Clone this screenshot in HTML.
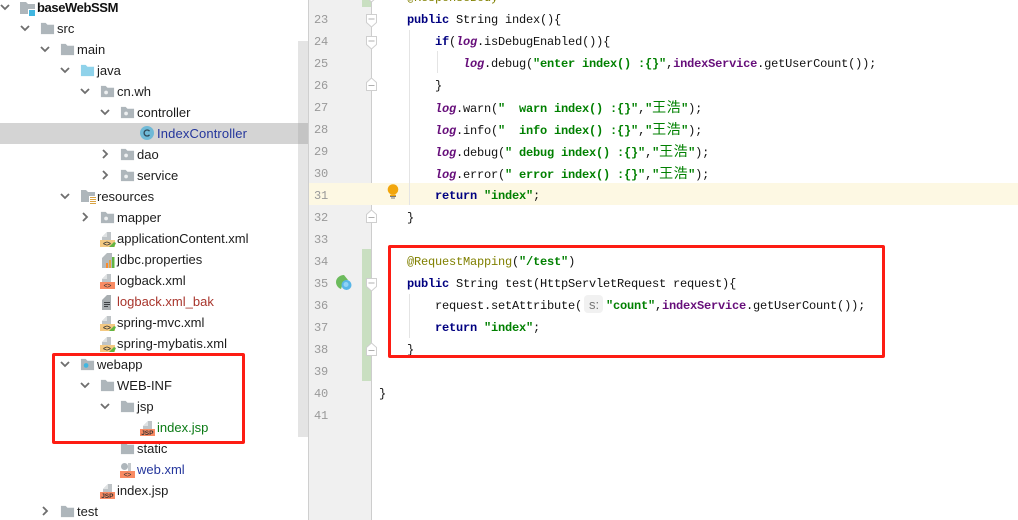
<!DOCTYPE html>
<html>
<head>
<meta charset="utf-8">
<style>
html,body{margin:0;padding:0;background:#fff;}
#r{position:relative;width:1018px;height:520px;overflow:hidden;background:#fff;}
#r div,#r svg,#r span.a{position:absolute;}
.t{font:13px/21px "Liberation Sans","DejaVu Sans",sans-serif;color:#1c1c1c;white-space:nowrap;height:21px;}
.c{font:12px/22px "Liberation Mono",monospace;letter-spacing:-.2px;color:#111;white-space:pre;height:22px;}
.n{font:12px/22px "Liberation Mono",monospace;letter-spacing:-.2px;color:#999;left:314px;white-space:pre;height:22px;}
.k{color:#000080;font-weight:bold}
.s{color:#008000;font-weight:bold}
.f{color:#660e7a;font-weight:bold}
.l{color:#660e7a;font-weight:bold;font-style:italic}
.o{color:#808000}
.z{font:14px "Liberation Sans","Noto Sans CJK SC",sans-serif;letter-spacing:.5px;color:#008000;}
.box{border:3px solid #fd1c13;border-radius:2px;box-sizing:border-box;}
</style>
</head>
<body>
<div id="r">
<svg width="0" height="0" style="left:0;top:0">
<defs>
<symbol id="folder" viewBox="0 0 16 16"><path d="M1 2h5l2 2h7v10H1z" fill="#aeb6bb"/></symbol>
<symbol id="java" viewBox="0 0 16 16"><path d="M1 2h5l2 2h7v10H1z" fill="#8fd2ea"/></symbol>
<symbol id="pkg" viewBox="0 0 16 16"><path d="M1 2h5l2 2h7v10H1z" fill="#aeb6bb"/><circle cx="6.500" cy="9" r="2" fill="#eef0f1"/></symbol>
<symbol id="web" viewBox="0 0 16 16"><path d="M1 2h5l2 2h7v10H1z" fill="#aeb6bb"/><circle cx="6.500" cy="9" r="2.500" fill="#40b6e0"/></symbol>
<symbol id="root" viewBox="0 0 16 16"><path d="M0 1h6l2 2h7v10H0z" fill="#aeb6bb"/><rect x="8" y="8" width="7" height="8" fill="#fff"/><rect x="9" y="9" width="6" height="6" fill="#40b6e0"/></symbol>
<symbol id="res" viewBox="0 0 16 16"><path d="M1 1h5l2 2h7v10H1z" fill="#aeb6bb"/><rect x="9" y="7" width="7" height="9" fill="#fff"/><path d="M10 8.500h6M10 10.500h6M10 12.500h6M10 14.500h6" stroke="#d9a343" stroke-width="1"/></symbol>
<symbol id="xmls" viewBox="0 0 16 16"><path d="M2 6l5-5h4v8H2z" fill="#bfc4c7"/><path d="M2 6l5-5v5z" fill="#dfe2e3"/><rect x="0" y="9" width="15" height="7" fill="#f4c982"/><text x="3" y="15" font-family="Liberation Mono,monospace" font-size="7" font-weight="bold" letter-spacing="-.5" fill="#333">&lt;&gt;</text><path d="M9 16l5-5 2 1-2 4z" fill="#62b543"/></symbol>
<symbol id="xmlo" viewBox="0 0 16 16"><path d="M2 6l5-5h4v8H2z" fill="#bfc4c7"/><path d="M2 6l5-5v5z" fill="#dfe2e3"/><rect x="0" y="9" width="15" height="7" fill="#f98b63"/><text x="3.500" y="15" font-family="Liberation Mono,monospace" font-size="7" letter-spacing="-.5" fill="#333">&lt;&gt;</text></symbol>
<symbol id="webx" viewBox="0 0 16 16"><circle cx="4.500" cy="4.500" r="3.500" fill="#aeb6bb"/><path d="M8 1h3v8H8z" fill="#c4c9cc"/><rect x="0" y="9" width="15" height="7" fill="#f98b63"/><text x="3.500" y="15" font-family="Liberation Mono,monospace" font-size="7" letter-spacing="-.5" fill="#333">&lt;&gt;</text></symbol>
<symbol id="prop" viewBox="0 0 16 16"><path d="M2 6l5-5h5v15H2z" fill="#b4babd"/><rect x="6" y="11" width="2" height="5" fill="#f98b2e"/><rect x="9" y="8" width="2" height="8" fill="#e8a33d"/><rect x="12" y="5" width="2.500" height="11" fill="#62b543"/></symbol>
<symbol id="txt" viewBox="0 0 16 16"><path d="M2 6l5-5h4v15H2z" fill="#a8aeb1"/><path d="M4 8.500h6M4 10.500h6M4 12.500h4" stroke="#3c4043" stroke-width="1"/></symbol>
<symbol id="jsp" viewBox="0 0 16 16"><path d="M3 6l5-5h4v8H3z" fill="#bfc4c7"/><path d="M3 6l5-5v5z" fill="#dfe2e3"/><rect x="0" y="9" width="15" height="7" fill="#f98b63"/><text x="1.200" y="15" font-family="Liberation Sans,sans-serif" font-size="6.500" font-weight="bold" fill="#333">JSP</text></symbol>
<symbol id="dn" viewBox="0 0 10 10"><path d="M1 3l4 4 4-4" fill="none" stroke="#6e6e6e" stroke-width="1.800"/></symbol>
<symbol id="rt" viewBox="0 0 10 10"><path d="M3 1l4 4-4 4" fill="none" stroke="#6e6e6e" stroke-width="1.800"/></symbol>
<symbol id="fo" viewBox="0 0 12 14"><path d="M.5.500h10v8l-5 4.500-5-4.500z" fill="#fff" stroke="#cfcfcf"/><path d="M2.500 5h6" stroke="#b0b0b0"/></symbol>
<symbol id="fc" viewBox="0 0 12 14"><path d="M.5 13.500h10v-8l-5-4.500-5 4.500z" fill="#fff" stroke="#cfcfcf"/><path d="M2.500 8.500h6" stroke="#b0b0b0"/></symbol>
</defs>
</svg>

<!-- project tree -->
<div style="left:0;top:123px;width:308px;height:21px;background:#d4d4d4"></div>
<div style="left:298px;top:41px;width:10px;height:396px;background:#e4e4e4"></div>
<div style="left:298px;top:123px;width:10px;height:21px;background:#c4c4c4"></div>
<div style="left:308px;top:0;width:1px;height:520px;background:#cfcfcf"></div>

<svg style="left:0;top:2px" width="10" height="10"><use href="#dn"/></svg>
<svg style="left:20px;top:1px" width="16" height="16"><use href="#root"/></svg>
<div class="t" style="left:37px;top:-3px;font-weight:bold;color:#111;letter-spacing:-.4px">baseWebSSM</div>

<svg style="left:20px;top:23px" width="10" height="10"><use href="#dn"/></svg>
<svg style="left:40px;top:21px" width="15" height="15"><use href="#folder"/></svg>
<div class="t" style="left:57px;top:18px">src</div>

<svg style="left:40px;top:44px" width="10" height="10"><use href="#dn"/></svg>
<svg style="left:60px;top:42px" width="15" height="15"><use href="#folder"/></svg>
<div class="t" style="left:77px;top:39px">main</div>

<svg style="left:60px;top:65px" width="10" height="10"><use href="#dn"/></svg>
<svg style="left:80px;top:63px" width="15" height="15"><use href="#java"/></svg>
<div class="t" style="left:97px;top:60px">java</div>

<svg style="left:80px;top:86px" width="10" height="10"><use href="#dn"/></svg>
<svg style="left:100px;top:84px" width="15" height="15"><use href="#pkg"/></svg>
<div class="t" style="left:117px;top:81px">cn.wh</div>

<svg style="left:100px;top:107px" width="10" height="10"><use href="#dn"/></svg>
<svg style="left:120px;top:105px" width="15" height="15"><use href="#pkg"/></svg>
<div class="t" style="left:137px;top:102px">controller</div>

<svg style="left:140px;top:126px" width="14" height="14"><circle cx="7" cy="7" r="7" fill="#6fb9d6"/><path d="M9.500 5.200A3 3 0 1 0 9.500 8.800" fill="none" stroke="#2f4858" stroke-width="1.300"/></svg>
<div class="t" style="left:157px;top:123px;color:#24369c;letter-spacing:.13px">IndexController</div>

<svg style="left:100px;top:149px" width="10" height="10"><use href="#rt"/></svg>
<svg style="left:120px;top:147px" width="15" height="15"><use href="#pkg"/></svg>
<div class="t" style="left:137px;top:144px">dao</div>

<svg style="left:100px;top:170px" width="10" height="10"><use href="#rt"/></svg>
<svg style="left:120px;top:168px" width="15" height="15"><use href="#pkg"/></svg>
<div class="t" style="left:137px;top:165px">service</div>

<svg style="left:60px;top:191px" width="10" height="10"><use href="#dn"/></svg>
<svg style="left:80px;top:189px" width="16" height="16"><use href="#res"/></svg>
<div class="t" style="left:97px;top:186px">resources</div>

<svg style="left:80px;top:212px" width="10" height="10"><use href="#rt"/></svg>
<svg style="left:100px;top:210px" width="15" height="15"><use href="#pkg"/></svg>
<div class="t" style="left:117px;top:207px">mapper</div>

<svg style="left:100px;top:231px" width="16" height="16"><use href="#xmls"/></svg>
<div class="t" style="left:117px;top:228px">applicationContent.xml</div>

<svg style="left:100px;top:252px" width="16" height="16"><use href="#prop"/></svg>
<div class="t" style="left:117px;top:249px">jdbc.properties</div>

<svg style="left:100px;top:273px" width="16" height="16"><use href="#xmlo"/></svg>
<div class="t" style="left:117px;top:270px">logback.xml</div>

<svg style="left:100px;top:294px" width="16" height="16"><use href="#txt"/></svg>
<div class="t" style="left:117px;top:291px;color:#a8352c">logback.xml_bak</div>

<svg style="left:100px;top:315px" width="16" height="16"><use href="#xmls"/></svg>
<div class="t" style="left:117px;top:312px">spring-mvc.xml</div>

<svg style="left:100px;top:336px" width="16" height="16"><use href="#xmls"/></svg>
<div class="t" style="left:117px;top:333px;letter-spacing:.1px">spring-mybatis.xml</div>

<svg style="left:60px;top:359px" width="10" height="10"><use href="#dn"/></svg>
<svg style="left:80px;top:357px" width="15" height="15"><use href="#web"/></svg>
<div class="t" style="left:97px;top:354px">webapp</div>

<svg style="left:80px;top:380px" width="10" height="10"><use href="#dn"/></svg>
<svg style="left:100px;top:378px" width="15" height="15"><use href="#folder"/></svg>
<div class="t" style="left:117px;top:375px">WEB-INF</div>

<svg style="left:100px;top:401px" width="10" height="10"><use href="#dn"/></svg>
<svg style="left:120px;top:399px" width="15" height="15"><use href="#folder"/></svg>
<div class="t" style="left:137px;top:396px">jsp</div>

<svg style="left:140px;top:420px" width="16" height="16"><use href="#jsp"/></svg>
<div class="t" style="left:157px;top:417px;color:#0a7a14">index.jsp</div>

<svg style="left:120px;top:441px" width="15" height="15"><use href="#folder"/></svg>
<div class="t" style="left:137px;top:438px">static</div>

<svg style="left:120px;top:462px" width="16" height="16"><use href="#webx"/></svg>
<div class="t" style="left:137px;top:459px;color:#24369c">web.xml</div>

<svg style="left:100px;top:483px" width="16" height="16"><use href="#jsp"/></svg>
<div class="t" style="left:117px;top:480px">index.jsp</div>

<svg style="left:40px;top:506px" width="10" height="10"><use href="#rt"/></svg>
<svg style="left:60px;top:504px" width="15" height="15"><use href="#folder"/></svg>
<div class="t" style="left:77px;top:501px">test</div>

<!-- gutter -->
<div style="left:309px;top:0;width:62px;height:520px;background:#f0f0f0"></div>
<div style="left:371px;top:0;width:1px;height:520px;background:#cdcdcd"></div>
<div style="left:309px;top:183px;width:709px;height:22px;background:#fdf8e3"></div>
<div style="left:362px;top:0;width:9px;height:7px;background:#c9dfc1"></div>
<div style="left:362px;top:249px;width:9px;height:132px;background:#c9dfc1"></div>

<div class="n" style="top:9px">23</div>
<div class="n" style="top:31px">24</div>
<div class="n" style="top:53px">25</div>
<div class="n" style="top:75px">26</div>
<div class="n" style="top:97px">27</div>
<div class="n" style="top:119px">28</div>
<div class="n" style="top:141px">29</div>
<div class="n" style="top:163px">30</div>
<div class="n" style="top:185px">31</div>
<div class="n" style="top:207px">32</div>
<div class="n" style="top:229px">33</div>
<div class="n" style="top:251px">34</div>
<div class="n" style="top:273px">35</div>
<div class="n" style="top:295px">36</div>
<div class="n" style="top:317px">37</div>
<div class="n" style="top:339px">38</div>
<div class="n" style="top:361px">39</div>
<div class="n" style="top:383px">40</div>
<div class="n" style="top:405px">41</div>

<!-- fold markers -->
<svg style="left:366px;top:-11px" width="12" height="14"><use href="#fo"/></svg>
<svg style="left:366px;top:14px" width="12" height="14"><use href="#fo"/></svg>
<svg style="left:366px;top:36px" width="12" height="14"><use href="#fo"/></svg>
<svg style="left:366px;top:77px" width="12" height="14"><use href="#fc"/></svg>
<svg style="left:366px;top:209px" width="12" height="14"><use href="#fc"/></svg>
<svg style="left:366px;top:278px" width="12" height="14"><use href="#fo"/></svg>
<svg style="left:366px;top:342px" width="12" height="14"><use href="#fc"/></svg>

<!-- indent guides -->
<div style="left:409px;top:30px;width:1px;height:175px;background:#e4e4e4"></div>
<div style="left:437px;top:51px;width:1px;height:22px;background:#e4e4e4"></div>
<div style="left:409px;top:294px;width:1px;height:44px;background:#e4e4e4"></div>

<!-- bulb -->
<svg style="left:386px;top:183px" width="14" height="19" viewBox="0 0 14 19"><circle cx="7" cy="6.500" r="5.300" fill="#f2a60c"/><path d="M4 12.500h6" stroke="#f2a60c" stroke-width="1.500"/><path d="M4 13.500h6M5 15h4" stroke="#7a7a7a" stroke-width="1"/></svg>

<!-- run icon -->
<svg style="left:335px;top:274px" width="18" height="18" viewBox="0 0 18 18"><path d="M1 8C1 4 5 1 9 1l4 5-5 3-2 6C3 14 1 11 1 8z" fill="#6cbb5c"/><circle cx="11.500" cy="11" r="5" fill="#58b6e8"/><circle cx="11" cy="10.500" r="2.500" fill="#8fd3f5"/></svg>

<!-- code -->
<div class="c o" style="left:407px;top:-13px">@ResponseBody</div>
<div class="c" style="left:407px;top:9px"><span class="k">public</span> String index(){</div>
<div class="c" style="left:435px;top:31px"><span class="k">if</span>(<span class="l">log</span>.isDebugEnabled()){</div>
<div class="c" style="left:463px;top:53px"><span class="l">log</span>.debug(<span class="s">"enter index() :{}"</span>,<span class="f">indexService</span>.getUserCount());</div>
<div class="c" style="left:435px;top:75px">}</div>
<div class="c" style="left:435px;top:97px"><span class="l">log</span>.warn(<span class="s">"  warn index() :{}"</span>,<span class="s">"<span class="z">王浩</span>"</span>);</div>
<div class="c" style="left:435px;top:119px"><span class="l">log</span>.info(<span class="s">"  info index() :{}"</span>,<span class="s">"<span class="z">王浩</span>"</span>);</div>
<div class="c" style="left:435px;top:141px"><span class="l">log</span>.debug(<span class="s">" debug index() :{}"</span>,<span class="s">"<span class="z">王浩</span>"</span>);</div>
<div class="c" style="left:435px;top:163px"><span class="l">log</span>.error(<span class="s">" error index() :{}"</span>,<span class="s">"<span class="z">王浩</span>"</span>);</div>
<div class="c" style="left:435px;top:185px"><span class="k">return</span> <span class="s">"index"</span>;</div>
<div class="c" style="left:407px;top:207px">}</div>
<div class="c" style="left:407px;top:251px"><span class="o">@RequestMapping</span>(<span class="s">"/test"</span>)</div>
<div class="c" style="left:407px;top:273px"><span class="k">public</span> String test(HttpServletRequest request){</div>
<div class="c" style="left:435px;top:295px">request.setAttribute(</div>
<div style="left:584px;top:295px;width:19px;height:18px;background:#f1f1f1;border-radius:4px"></div>
<div class="t" style="left:589px;top:294px;font-size:13px;color:#777">s:</div>
<div class="c" style="left:606px;top:295px"><span class="s">"count"</span>,<span class="f">indexService</span>.getUserCount());</div>
<div class="c" style="left:435px;top:317px"><span class="k">return</span> <span class="s">"index"</span>;</div>
<div class="c" style="left:407px;top:339px">}</div>
<div class="c" style="left:379px;top:383px">}</div>

<!-- red boxes -->
<div class="box" style="left:52px;top:353px;width:193px;height:91px"></div>
<div class="box" style="left:388px;top:245px;width:497px;height:113px"></div>
</div>
</body>
</html>
